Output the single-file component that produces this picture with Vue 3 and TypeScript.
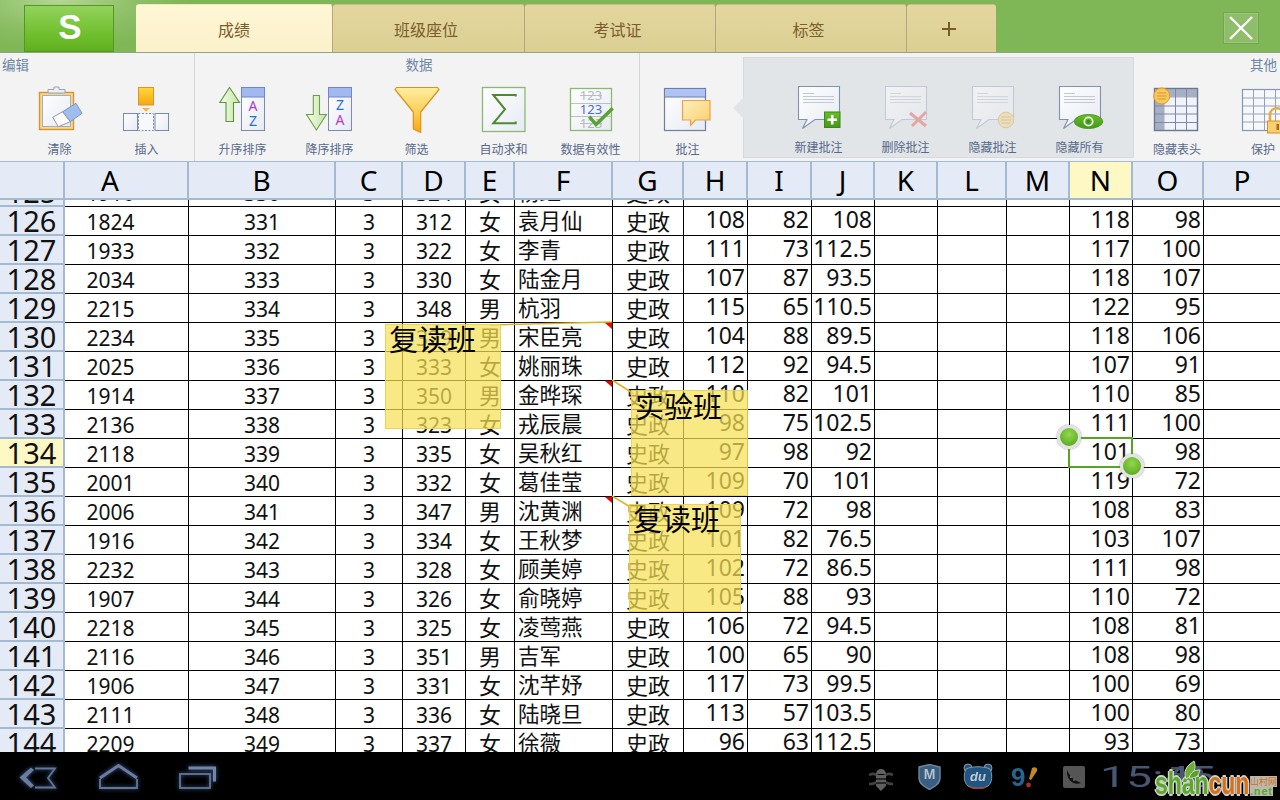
<script setup lang="ts">
type Row = { n: number; c: string[]; flag?: boolean; sel?: boolean }

const letters = 'ABCDEFGHIJKLMNOP'.split('')
const raw: string = `125|1916|330|3|324|女|杨红|史政||||||||
126|1824|331|3|312|女|袁月仙|史政|108|82|108||||118|98
127|1933|332|3|322|女|李青|史政|111|73|112.5||||117|100
128|2034|333|3|330|女|陆金月|史政|107|87|93.5||||118|107
129|2215|334|3|348|男|杭羽|史政|115|65|110.5||||122|95
130|2234|335|3|329|男|宋臣亮|史政|104|88|89.5||||118|106
131|2025|336|3|333|女|姚丽珠|史政|112|92|94.5||||107|91
132|1914|337|3|350|男|金晔琛|史政|110|82|101||||110|85
133|2136|338|3|323|女|戎辰晨|史政|98|75|102.5||||111|100
134|2118|339|3|335|女|吴秋红|史政|97|98|92||||101|98
135|2001|340|3|332|女|葛佳莹|史政|109|70|101||||119|72
136|2006|341|3|347|男|沈黄渊|史政|109|72|98||||108|83
137|1916|342|3|334|女|王秋梦|史政|101|82|76.5||||103|107
138|2232|343|3|328|女|顾美婷|史政|102|72|86.5||||111|98
139|1907|344|3|326|女|俞晓婷|史政|105|88|93||||110|72
140|2218|345|3|325|女|凌莺燕|史政|106|72|94.5||||108|81
141|2116|346|3|351|男|吉军|史政|100|65|90||||108|98
142|1906|347|3|331|女|沈芊妤|史政|117|73|99.5||||100|69
143|2111|348|3|336|女|陆晓旦|史政|113|57|103.5||||100|80
144|2209|349|3|337|女|徐薇|史政|96|63|112.5||||93|73`

const flagged = [130, 132, 136]
const rows: Row[] = raw.split('\n').map((line) => {
  const p = line.trim().split('|')
  const n = Number(p[0])
  return { n, c: [...p.slice(1, 16), ''], flag: flagged.includes(n), sel: n === 134 }
})

function cellClass(i: number): string {
  if (i === 0) return 'num-c col-a'
  if (i <= 3) return 'num-c'
  if (i === 4 || i === 6) return 'cjk-c'
  if (i === 5) return 'cjk-l'
  return 'num-r'
}

const tabs = ['成绩', '班级座位', '考试证', '标签']
</script>

<template>
  <div class="page">
    <header class="topbar">
      <div class="logo">S</div>
      <nav class="tabs">
        <div v-for="(t, i) in tabs" :key="t" class="tab" :class="[`tab${i}`, { active: i === 0 }]">{{ t }}</div>
        <div class="tab add">
          <svg width="16" height="16" viewBox="0 0 16 16"><path d="M8 1v14M1 8h14" stroke="#7a5a26" stroke-width="2" /></svg>
        </div>
      </nav>
      <button class="close" type="button">
        <svg width="26" height="26" viewBox="0 0 26 26"><path d="M2 2l22 22M24 2L2 24" stroke="#fff" stroke-width="2.4" /></svg>
      </button>
    </header>

    <section class="ribbon">
      <div class="group g-edit">
        <div class="gtitle left">编辑</div>
        <div class="tools">
          <div class="tool">
            <svg width="48" height="48" viewBox="0 0 48 48">
              <defs>
                <linearGradient id="paper" x1="0" y1="0" x2="1" y2="1"><stop offset="0" stop-color="#fff" /><stop offset="1" stop-color="#e6eaf3" /></linearGradient>
                <linearGradient id="orange" x1="0" y1="0" x2="0" y2="1"><stop offset="0" stop-color="#ffd83a" /><stop offset="1" stop-color="#f5a810" /></linearGradient>
                <linearGradient id="funnel" x1="0" y1="0" x2="0" y2="1"><stop offset="0" stop-color="#fdeea2" /><stop offset=".55" stop-color="#fbcf55" /><stop offset="1" stop-color="#f7a60e" /></linearGradient>
                <linearGradient id="bubble" x1="0" y1="0" x2="1" y2="1"><stop offset="0" stop-color="#fdf0c0" /><stop offset="1" stop-color="#f8cf68" /></linearGradient>
                <linearGradient id="gpl" x1="0" y1="0" x2="0" y2="1"><stop offset="0" stop-color="#68bd28" /><stop offset="1" stop-color="#43991a" /></linearGradient>
                <linearGradient id="arrow" x1="0" y1="0" x2="1" y2="0"><stop offset="0" stop-color="#f2fbe8" /><stop offset="1" stop-color="#c6e6a8" /></linearGradient>
              </defs>
              <rect x="3.5" y="6.5" width="34" height="37" fill="#f6d793" stroke="#d9952c" stroke-width="1.4" />
              <rect x="6.5" y="9.5" width="28" height="31" fill="url(#paper)" stroke="#a3adc3" />
              <path d="M12 7V3.5h6V1h5v2.5h6V7z" fill="#eef0f4" stroke="#9aa3b4" />
              <path d="M16.7 31.3l10-5.6 7.6 10-12 5z" fill="#fff" stroke="#8f96a6" />
              <path d="M26.7 25.7L40 17.3l6 10-11.7 8.4z" fill="#9fbdee" stroke="#7f96bf" />
            </svg>
            <span class="lbl">清除</span>
          </div>
          <div class="tool">
            <svg width="48" height="48" viewBox="0 0 48 48">
              <rect x="15.5" y="1.5" width="15" height="17.5" fill="url(#orange)" stroke="#d9952c" />
              <path d="M19 22h8l-4 3.8z" fill="#f7b24a" />
              <rect x="0.5" y="27.5" width="14" height="17" fill="url(#paper)" stroke="#7c8bab" />
              <rect x="15.5" y="27.5" width="15" height="17" fill="#f7f8fb" stroke="#7c8bab" stroke-dasharray="2 1.5" />
              <rect x="32" y="27.5" width="13.5" height="17" fill="url(#paper)" stroke="#7c8bab" />
            </svg>
            <span class="lbl">插入</span>
          </div>
        </div>
      </div>

      <div class="group g-data">
        <div class="gtitle">数据</div>
        <div class="tools">
          <div class="tool">
            <svg width="48" height="48" viewBox="0 0 48 48">
              <path d="M10.5 1.5L20.5 16.5H14.5V35.5H7V16.5H.8z" fill="url(#arrow)" stroke="#5f9440" stroke-width="1.1" />
              <rect x="22.5" y="1.5" width="23" height="43" fill="url(#paper)" stroke="#7c8bab" />
              <rect x="22.5" y="1.5" width="23" height="9.5" fill="#a3b8ee" stroke="#6f85cf" />
              <text x="34" y="25" class="az" fill="#b23dc9">A</text>
              <text x="34" y="40" class="az" fill="#2b6fd2">Z</text>
            </svg>
            <span class="lbl">升序排序</span>
          </div>
          <div class="tool">
            <svg width="48" height="48" viewBox="0 0 48 48">
              <path d="M7.3 9.5H13.5V28.5H20.4L10.4 44 .5 28.5H7.3z" fill="url(#arrow)" stroke="#6d9f4c" stroke-width="1.1" />
              <rect x="22.5" y="1.5" width="23" height="43" fill="url(#paper)" stroke="#7c8bab" />
              <rect x="22.5" y="1.5" width="23" height="9.5" fill="#a3b8ee" stroke="#6f85cf" />
              <text x="34" y="24" class="az" fill="#2b6fd2">Z</text>
              <text x="34" y="39" class="az" fill="#b23dc9">A</text>
            </svg>
            <span class="lbl">降序排序</span>
          </div>
          <div class="tool">
            <svg width="48" height="48" viewBox="0 0 48 48">
              <path d="M3.5 1.5H44.500L46 3.500 27.700 26V46.500L20.300 43V26L2 3.500z" fill="url(#funnel)" stroke="#e08f1c" stroke-width="1.2" stroke-linejoin="round" />
            </svg>
            <span class="lbl">筛选</span>
          </div>
          <div class="tool">
            <svg width="48" height="48" viewBox="0 0 48 48">
              <rect x="2.500" y="1.500" width="42.500" height="44" fill="url(#paper)" stroke="#8db874" stroke-width="1.300" />
              <path d="M35.700 10.500V9H13.300L25 23.300 13.300 37.300H35.700V35.500" fill="none" stroke="#4e8a2c" stroke-width="2" />
            </svg>
            <span class="lbl">自动求和</span>
          </div>
          <div class="tool">
            <svg width="48" height="48" viewBox="0 0 48 48">
              <rect x="3.500" y="2.500" width="41" height="42" fill="url(#paper)" stroke="#8db874" stroke-width="1.300" />
              <path d="M4 17.500H44M4 30.500H44" stroke="#b8c4b8" />
              <text x="24" y="14" class="n123 faint">123</text>
              <path d="M13 9.500H35" stroke="#b9bdc4" />
              <text x="24" y="28" class="n123 blue">123</text>
              <text x="24" y="42" class="n123 faint">123</text>
              <path d="M13 37.500H35" stroke="#b9bdc4" />
              <path d="M22.300 30.700L29 38.500 45.700 22.300" fill="none" stroke="#58a22e" stroke-width="3.400" />
            </svg>
            <span class="lbl">数据有效性</span>
          </div>
        </div>
      </div>

      <div class="group g-note">
        <div class="tools spaced">
          <div class="tool">
            <svg width="48" height="48" viewBox="0 0 48 48">
              <rect x=".5" y="2.500" width="41" height="42" fill="url(#paper)" stroke="#6f7fa3" stroke-width="1.200" />
              <rect x=".5" y="2.500" width="41" height="8.500" fill="#aec2f4" stroke="#6f7fa3" />
              <path d="M18.500 14.500H46V34H31.500L26.500 39.500V34H18.500z" fill="url(#bubble)" stroke="#eda14a" stroke-width="1.200" />
            </svg>
            <span class="lbl">批注</span>
          </div>
        </div>
      </div>

      <div class="panel">
        <div class="tools">
          <div class="tool">
            <svg width="48" height="48" viewBox="0 0 48 48">
              <path d="M3.500 .5H44.500V33.500H20L7.500 42.500 12 33.500H3.500z" fill="url(#paper)" stroke="#8490b0" stroke-width="1.100" />
              <path d="M8 7.500H19M8 10.500H39M8 13.500H39M8 16.500H39" stroke="#c4c8d2" />
              <rect x="29.500" y="26" width="15.500" height="15.500" fill="url(#gpl)" stroke="#3d8617" />
              <path d="M37.200 29v9.500M32.500 33.700H42" stroke="#fff" stroke-width="2.600" />
            </svg>
            <span class="lbl">新建批注</span>
          </div>
          <div class="tool">
            <svg width="48" height="48" viewBox="0 0 48 48">
              <g opacity=".5">
                <path d="M3.500 .5H44.500V33.500H20L7.500 42.500 12 33.500H3.500z" fill="url(#paper)" stroke="#a6aec6" stroke-width="1.100" />
                <path d="M8 7.500H19M8 10.500H39M8 13.500H39M8 16.500H39" stroke="#c4c8d2" />
              </g>
              <path d="M28 27L44 40M44 26L30 40" stroke="#e6a5a5" stroke-width="3" />
            </svg>
            <span class="lbl">删除批注</span>
          </div>
          <div class="tool">
            <svg width="48" height="48" viewBox="0 0 48 48">
              <g opacity=".5">
                <path d="M3.500 .5H44.500V33.500H20L7.500 42.500 12 33.500H3.500z" fill="url(#paper)" stroke="#a6aec6" stroke-width="1.100" />
                <path d="M8 7.500H19M8 10.500H39M8 13.500H39M8 16.500H39" stroke="#c4c8d2" />
              </g>
              <circle cx="37" cy="34" r="7.800" fill="#ebdcbb" stroke="#dbc89c" />
              <path d="M32.500 31H41.500M32 34H42M32.500 37H41.500" stroke="#d9c69c" />
            </svg>
            <span class="lbl">隐藏批注</span>
          </div>
          <div class="tool">
            <svg width="48" height="48" viewBox="0 0 48 48">
              <path d="M3.500 .5H44.500V33.500H20L7.500 42.500 12 33.500H3.500z" fill="url(#paper)" stroke="#8490b0" stroke-width="1.100" />
              <path d="M8 7.500H19M8 10.500H39M8 13.500H39M8 16.500H39" stroke="#c4c8d2" />
              <ellipse cx="32.500" cy="35.500" rx="14.200" ry="7" fill="url(#gpl)" stroke="#4a9a1e" />
              <circle cx="32.500" cy="35.500" r="4.200" fill="none" stroke="#e8f2dc" stroke-width="1.800" />
              <circle cx="32.500" cy="35.500" r="1.800" fill="#3f8a18" />
            </svg>
            <span class="lbl">隐藏所有</span>
          </div>
        </div>
      </div>

      <div class="group g-other">
        <div class="gtitle right">其他</div>
        <div class="tools">
          <div class="tool">
            <svg width="48" height="48" viewBox="0 0 48 48">
              <rect x="1.500" y="2.500" width="43" height="42" fill="#f0f3f9" stroke="#6b7690" stroke-width="1.200" />
              <path d="M1 2.500H45V11.500H11.500V45H1z" fill="#a6afc4" />
              <path d="M22.500 3V45M33.500 3V45M1 20H45M1 28H45M1 36.500H45" stroke="#7d88a4" />
              <rect x="1.500" y="2.500" width="43" height="42" fill="none" stroke="#6b7690" stroke-width="1.200" />
              <circle cx="8.700" cy="10" r="8" fill="#f8c85a" stroke="#e09a2c" />
              <path d="M4.500 7H13M3.700 10H13.700M4.500 13H13" stroke="#d89a30" />
            </svg>
            <span class="lbl">隐藏表头</span>
          </div>
          <div class="tool">
            <svg width="48" height="48" viewBox="0 0 48 48">
              <rect x="3.500" y="3.500" width="41" height="41" fill="#f6f8fc" stroke="#8794b2" stroke-width="1.200" />
              <path d="M14.500 4V44M25.500 4V44M36.500 4V44M4 12H44M4 20H44M4 28H44M4 36H44" stroke="#95a2bf" />
              <path d="M31 36V29c0-9 14-9 14 0v7" fill="none" stroke="#e7ad3c" stroke-width="2.600" />
              <rect x="28.500" y="35" width="20" height="12" fill="#f8d070" stroke="#d98f22" />
              <rect x="37.500" y="38" width="2.500" height="6" fill="#a86c14" />
            </svg>
            <span class="lbl">保护</span>
          </div>
        </div>
      </div>
    </section>

    <section class="sheet">
      <div class="grid-row head">
        <div class="hcell corner"></div>
        <div v-for="l in letters" :key="l" class="hcell" :class="{ on: l === 'N', 'col-a': l === 'A' }">{{ l }}</div>
      </div>
      <div class="body">
        <div class="rows">
          <div v-for="r in rows" :key="r.n" class="grid-row row">
            <div class="rowno" :class="{ on: r.sel }">{{ r.n }}</div>
            <div v-for="(v, i) in r.c" :key="i" class="cell" :class="cellClass(i)">
              {{ v }}
              <i v-if="r.flag && i === 5" class="flag"></i>
            </div>
          </div>
        </div>

        <svg class="links" width="1280" height="552" viewBox="0 0 1280 552">
          <path d="M612 122L490 125M612 180L634 194M612 296L632 308" stroke="#dcb324" stroke-width="1.500" fill="none" />
        </svg>
        <div class="note n1">复读班</div>
        <div class="note n2">实验班</div>
        <div class="note n3">复读班</div>
        <div class="selbox"></div>
        <i class="handle h1"></i>
        <i class="handle h2"></i>
      </div>
    </section>

    <footer class="navbar">
      <svg class="keys" width="230" height="48" viewBox="0 0 230 48">
        <path d="M31 15.500L19.500 25.500 31 36 34 33.500 26 25.500 34 18z" fill="#6b7c9c" />
        <path d="M35 16.500H55L48 26 55 35.500H35" fill="none" stroke="#66768f" stroke-width="1.800" />
        <path d="M100 26L118.500 13.500 137 26" fill="none" stroke="#6b7c9c" stroke-width="3" />
        <path d="M100 27V36H137V27" fill="none" stroke="#66768f" stroke-width="1.800" />
        <rect x="180" y="22" width="30" height="14" fill="none" stroke="#66768f" stroke-width="1.800" />
        <path d="M188.500 16H214.500V29.500" fill="none" stroke="#7685a3" stroke-width="3" />
      </svg>

      <div class="status">
        <svg class="s1" width="26" height="28" viewBox="0 0 26 28">
          <path d="M1 11c4-2 7-1 9 1M25 11c-4-2-7-1-9 1M1 20c4 0 7-1 9-3M25 20c-4 0-7-1-9-3" stroke="#4a4a4a" stroke-width="2.500" fill="none" />
          <path d="M8 10a5 5 0 0110 0z" fill="#6c6c6c" />
          <path d="M8 11h10v11l-5 5-5-5z" fill="#6a6a6a" />
          <path d="M8 15h10M8 19h10" stroke="#1a1a1a" stroke-width="1.500" />
        </svg>
        <svg class="s2" width="23" height="26" viewBox="0 0 23 26">
          <path d="M1 3l10.500-2.500L22 3v11c0 6-6 9-10.500 11.500C7 23 1 20 1 14z" fill="#3f6a8f" stroke="#7f95ab" stroke-width="1.400" />
          <text x="11.500" y="15" class="ico-m">M</text>
        </svg>
        <svg class="s3" width="30" height="26" viewBox="0 0 30 26">
          <circle cx="5" cy="5" r="4" fill="#245f8f" stroke="#98a9b8" />
          <circle cx="25" cy="5" r="4" fill="#245f8f" stroke="#98a9b8" />
          <path d="M3 6c6-3 18-3 24 0 3 6 2 14-2 17-6 3-14 3-20 0C1 20 0 12 3 6z" fill="#245f8f" stroke="#98a9b8" />
          <path d="M7 24c5 2 11 2 16 0" stroke="#c0452c" stroke-width="1.600" fill="none" />
          <text x="15" y="18" class="ico-du">du</text>
        </svg>
        <svg class="s4" width="30" height="24" viewBox="0 0 30 24">
          <text x="0" y="20" class="ico-9">9</text>
          <path d="M21 2c3-2 6 0 5 3l-6 9-2-1z" fill="#d89a22" />
          <circle cx="17.500" cy="19" r="2.400" fill="#b53a2a" />
        </svg>
        <svg class="s5" width="22" height="22" viewBox="0 0 22 22">
          <rect width="22" height="22" rx="2" fill="#5f5f5f" />
          <path d="M4 4c3 7 7 10 14 13-7 3-15-3-14-13z" fill="#141414" />
          <circle cx="8" cy="11" r=".9" fill="#888" />
          <circle cx="11" cy="14" r=".9" fill="#888" />
        </svg>
        <span class="clock">15:45</span>
        <svg class="s6" width="40" height="24" viewBox="0 0 40 24">
          <path d="M1 2H14V5H1z" fill="#4e5660" />
          <path d="M3 8H12V11H3z" fill="#4e5660" />
          <path d="M25 14V6L29 1 33 6V14z" fill="#4e5660" />
        </svg>
      </div>

      <div class="mark">
        <svg class="leaf" width="20" height="20" viewBox="0 0 20 20">
          <path d="M5 19C2 12 5 6 13 1 16 8 13 15 5 19z" fill="#6dae36" stroke="#d5dbce" />
          <path d="M8 18c2-6 5-8 11-8-1 6-5 9-11 8z" fill="#5ba02a" stroke="#d5dbce" />
        </svg>
        <span class="word"><b class="g">shan</b><b class="o">cun</b></span>
        <span class="cn">山村网</span>
        <span class="net">.net</span>
      </div>
    </footer>
  </div>
</template>

<style>
html,
body {
  margin: 0;
  background: #000;
}
</style>

<style scoped>
.page {
  width: 1280px;
  height: 800px;
  overflow: hidden;
  position: relative;
  display: flex;
  flex-direction: column;
  font-family: "Noto Sans", "Noto Sans CJK SC", sans-serif;
}

/* top bar */
.topbar {
  height: 53px;
  flex: none;
  display: flex;
  align-items: flex-end;
  padding-left: 24px;
  box-sizing: border-box;
  background: radial-gradient(ellipse 130px 50px at 60px 0, #b4d594 0%, #8dbf66 60%, rgba(127, 182, 86, 0) 100%), #7fb656;
  border-bottom: 1px solid #8fa488;
  position: relative;
}
.logo {
  width: 90px;
  height: 47px;
  box-sizing: border-box;
  border: 1px solid #4f9a1f;
  background: linear-gradient(180deg, #93d25d 0%, #74c233 55%, #5fb01e 100%);
  color: #fff;
  font: bold 35px/42px "Liberation Sans", sans-serif;
  text-align: center;
  padding-left: 2px;
}
.tabs {
  display: flex;
  margin-left: 22px;
  height: 48px;
}
.tab {
  box-sizing: border-box;
  display: flex;
  align-items: center;
  justify-content: center;
  font-size: 16px;
  padding: 0 5px 0 0;
  color: #7b5c2d;
  background: linear-gradient(180deg, #e3d79f 0%, #dccf93 100%);
  border-right: 1px solid #b5a67c;
  border-top: 1px solid #c9bd8c;
  border-radius: 3px 3px 0 0;
}
.tab.active {
  background: linear-gradient(180deg, #fff6d4 0%, #fbf1ca 100%);
  border-top-color: #f0e7bd;
  padding-right: 0;
}
.tab0 { width: 197px; }
.tab1 { width: 192px; }
.tab2 { width: 191px; }
.tab3 { width: 191px; }
.add { width: 89px; border-right: none; }
.close {
  position: absolute;
  left: 1224px;
  top: 13px;
  width: 34px;
  height: 30px;
  padding: 0;
  display: flex;
  align-items: center;
  justify-content: center;
  background: rgba(255, 255, 255, 0.12);
  border: 1px solid #9cc57c;
  box-shadow: 0 0 0 1px rgba(80, 120, 60, 0.25);
}

/* ribbon */
.ribbon {
  height: 108px;
  flex: none;
  display: flex;
  background: #f3f3f3;
  overflow: hidden;
}
.group {
  box-sizing: border-box;
  padding-top: 4px;
  flex: none;
}
.g-edit {
  width: 195px;
  padding-left: 16px;
  border-right: 1px solid #d4d8d4;
}
.g-data {
  width: 445px;
  padding-left: 4px;
  border-right: 1px solid #d4d8d4;
}
.g-note {
  width: 103px;
  padding-left: 4px;
}
.gtitle {
  height: 16px;
  line-height: 16px;
  font-size: 13.5px;
  color: #6c86a6;
  text-align: center;
}
.gtitle.left {
  text-align: left;
  margin-left: -14px;
}
.gtitle.right {
  text-align: right;
  padding-right: 3px;
}
.tools {
  display: flex;
  margin-top: 13px;
}
.tools.spaced {
  margin-top: 29px;
}
.tool {
  width: 87px;
  flex: none;
  display: flex;
  flex-direction: column;
  align-items: center;
}
.tool svg {
  display: block;
  overflow: visible;
}
.lbl {
  margin-top: 9px;
  font-size: 12px;
  line-height: 14px;
  color: #56698c;
  white-space: nowrap;
}
.panel {
  flex: none;
  width: 391px;
  height: 101px;
  margin-top: 4px;
  box-sizing: border-box;
  padding-left: 31px;
  background: #e2e5e7;
  border: 1px solid #d7dadc;
  position: relative;
}
.panel::before {
  content: "";
  position: absolute;
  left: -11px;
  top: 39px;
  border-style: solid;
  border-width: 11px 11px 11px 0;
  border-color: transparent #e2e5e7 transparent transparent;
}
.panel .tools {
  margin-top: 28px;
}
.panel .lbl {
  margin-top: 7px;
}
.g-other {
  width: 146px;
}
.g-other .tools {
  margin-top: 13px;
  padding-left: 0;
}
.g-other .tool {
  width: 86px;
}
.az {
  font: 14px "Noto Sans", sans-serif;
  text-anchor: middle;
}
.n123 {
  font: 13px "Noto Sans", sans-serif;
  text-anchor: middle;
}
.n123.faint { fill: #b4b8bf; }
.n123.blue { fill: #4d6cd8; }

/* sheet */
.sheet {
  flex: none;
  height: 591px;
  background: #fff;
  overflow: hidden;
}
.grid-row {
  display: grid;
  grid-template-columns: 65px 124px 147px 67px 63px 49px 98px 71px 64px 64px 63px 63px 69px 63px 63px 71px 76px;
}
.head {
  height: 39px;
  box-sizing: border-box;
  border-top: 1px solid #a3bad2;
  border-bottom: 2px solid #a3bad2;
}
.hcell {
  box-sizing: border-box;
  background: #e4ebf6;
  border-right: 2px solid #a3bad2;
  text-align: center;
  font-size: 28px;
  line-height: 36px;
  color: #000;
}
.hcell:last-child {
  border-right: none;
}
.hcell.on {
  background: #fdf8c4;
}
.col-a {
  padding-right: 32px;
}
.body {
  position: relative;
  height: 552px;
  overflow: hidden;
}
.rows {
  margin-top: -22px;
}
.row {
  height: 29px;
  grid-template-rows: 29px;
}
.rowno {
  box-sizing: border-box;
  background: #e4ebf6;
  border-right: 2px solid #a3bad2;
  border-bottom: 2px solid #a3bad2;
  font-size: 29px;
  line-height: 27px;
  text-align: center;
  color: #111;
}
.rowno.on {
  background: #fdf8c4;
}
.cell {
  box-sizing: border-box;
  position: relative;
  border-right: 1px solid #000;
  border-bottom: 1px solid #000;
  color: #111;
  white-space: nowrap;
  line-height: 30px;
}
.cell:last-child {
  border-right: none;
}
.num-c {
  text-align: center;
  font-size: 21px;
}
.num-r {
  text-align: right;
  padding-right: 2px;
  font-size: 23px;
  line-height: 25px;
}
.cjk-c {
  text-align: center;
  font-size: 22px;
  line-height: 28px;
}
.cjk-l {
  text-align: left;
  padding-left: 3px;
  font-size: 21.5px;
  line-height: 28px;
}
.flag {
  position: absolute;
  right: 0;
  top: 0;
  border-style: solid;
  border-width: 0 7px 6px 0;
  border-color: transparent #f00000 transparent transparent;
}
.links {
  position: absolute;
  left: 0;
  top: 0;
}
.note {
  position: absolute;
  box-sizing: border-box;
  background: rgba(245, 225, 85, 0.72);
  border: 1px solid rgba(230, 205, 80, 0.8);
  font-size: 29px;
  line-height: 30px;
  padding-left: 3px;
  color: #000;
  white-space: nowrap;
}
.n1 { left: 385px; top: 124px; width: 116px; height: 105px; }
.n2 { left: 631px; top: 190px; width: 117px; height: 106px; padding-top: 1px; }
.n3 { left: 629px; top: 304px; width: 112px; height: 108px; }
.selbox {
  position: absolute;
  left: 1068px;
  top: 237px;
  width: 65px;
  height: 31px;
  box-sizing: border-box;
  border: 2px solid #56a51c;
}
.handle {
  position: absolute;
  box-sizing: border-box;
  width: 24px;
  height: 24px;
  border-radius: 50%;
  border: 3px solid #e3e3e3;
  background: radial-gradient(circle at 50% 35%, #93d651 0%, #6dbb2c 55%, #4d9a14 100%);
  box-shadow: 0 0 2px #777;
}
.h1 { left: 1057px; top: 225px; }
.h2 { left: 1120px; top: 254px; }

/* nav bar */
.navbar {
  flex: none;
  height: 48px;
  background: #000;
  display: flex;
  position: relative;
}
.keys {
  flex: none;
  filter: drop-shadow(0 0 2px #3e5f9c);
}
.status {
  position: relative;
  margin-left: 638px;
  display: flex;
  align-items: flex-start;
  opacity: 0.9;
}
.status svg {
  flex: none;
}
.s1 { margin-top: 12px; }
.s2 { margin: 12px 0 0 24px; }
.s3 { margin: 11px 0 0 22px; }
.s4 { margin: 14px 0 0 18px; }
.s5 { margin: 14px 0 0 22px; }
.s6 { margin: 13px 0 0 85px; }
.ico-m {
  font: bold 14px "Liberation Sans", sans-serif;
  fill: #cbd6e0;
  text-anchor: middle;
}
.ico-du {
  font: italic bold 13px "Liberation Sans", sans-serif;
  fill: #d8e0e8;
  text-anchor: middle;
}
.ico-9 {
  font: bold 26px "Liberation Sans", sans-serif;
  fill: #2a72a0;
}
.clock {
  position: absolute;
  left: 232px;
  top: 7px;
  font: 400 29px/36px Roboto, sans-serif;
  color: #4f607f;
  transform: scaleX(1.6);
  transform-origin: left center;
  white-space: nowrap;
}
.mark {
  position: absolute;
  left: 1155px;
  top: 8px;
  width: 122px;
  height: 36px;
}
.leaf {
  position: absolute;
  left: 26px;
  top: 0;
  z-index: 1;
}
.word {
  position: absolute;
  left: 0;
  top: 7px;
  font: bold 31px/34px "Liberation Sans", sans-serif;
  transform: scaleX(0.74);
  transform-origin: left center;
  white-space: nowrap;
  text-shadow: 1px 0 #cfd0ca, -1px 0 #cfd0ca, 0 1px #cfd0ca, 0 -1px #cfd0ca, 2px 0 #cfd0ca, -2px 0 #cfd0ca, 0 2px #cfd0ca, 0 -2px #cfd0ca;
}
.word b { font-weight: bold; }
.g { color: #5aa82a; }
.o { color: #d6701a; }
.cn {
  position: absolute;
  left: 95px;
  top: 16px;
  font-size: 9px;
  line-height: 11px;
  color: #d6701a;
  white-space: nowrap;
  background: #b9b9b0;
}
.net {
  position: absolute;
  left: 95px;
  top: 26px;
  font: bold 11px/10px "Liberation Sans", sans-serif;
  letter-spacing: 0.8px;
  color: #5aa82a;
  background: #b9b9b0;
}
</style>
